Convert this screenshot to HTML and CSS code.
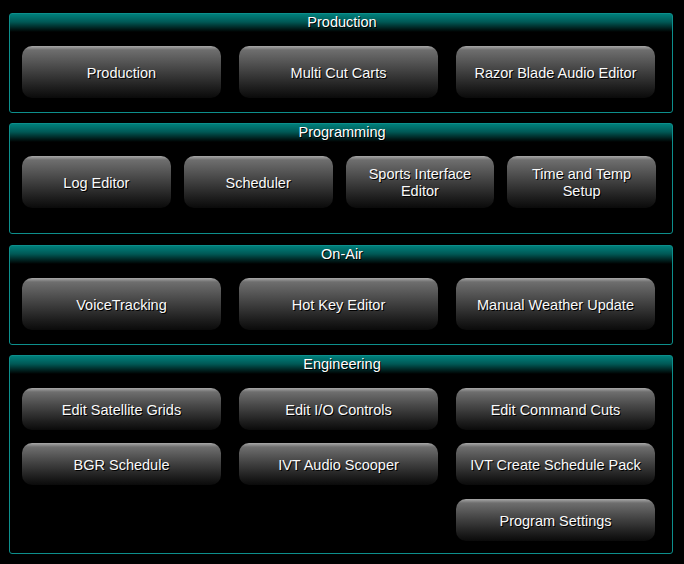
FILE: index.html
```html
<!DOCTYPE html>
<html>
<head>
<meta charset="utf-8">
<link rel="stylesheet" href="styles.css">
</head>
<body>
<div class="page">
  <section class="panel panel-short">
    <div class="panel-title">Production</div>
    <div class="grid cols3">
      <div class="btn">Production</div>
      <div class="btn">Multi Cut Carts</div>
      <div class="btn">Razor Blade Audio Editor</div>
    </div>
  </section>
  <section class="panel panel-prog">
    <div class="panel-title">Programming</div>
    <div class="grid cols4">
      <div class="btn">Log Editor</div>
      <div class="btn">Scheduler</div>
      <div class="btn">Sports Interface<br>Editor</div>
      <div class="btn">Time and Temp<br>Setup</div>
    </div>
  </section>
  <section class="panel panel-short panel-air">
    <div class="panel-title">On-Air</div>
    <div class="grid cols3">
      <div class="btn">VoiceTracking</div>
      <div class="btn">Hot Key Editor</div>
      <div class="btn">Manual Weather Update</div>
    </div>
  </section>
  <section class="panel panel-eng">
    <div class="panel-title">Engineering</div>
    <div class="grid cols3 eng">
      <div class="btn">Edit Satellite Grids</div>
      <div class="btn">Edit I/O Controls</div>
      <div class="btn">Edit Command Cuts</div>
      <div class="btn">BGR Schedule</div>
      <div class="btn">IVT Audio Scooper</div>
      <div class="btn">IVT Create Schedule Pack</div>
      <div class="btn col3">Program Settings</div>
    </div>
  </section>
</div>
</body>
</html>
```

FILE: styles.css
```css
html, body {
  margin: 0;
  padding: 0;
  background: #000;
}
body {
  font-family: "Liberation Sans", Arial, sans-serif;
  font-size: 14.5px;
  color: #fff;
}
.page {
  display: flex;
  flex-direction: column;
  gap: 10px;
  padding: 13px 11px 0 9px;
  width: 664px;
}
.panel {
  box-sizing: border-box;
  border: 1px solid #0d8f8c;
  border-radius: 3px;
  background: linear-gradient(#00807c 0px, #005855 8px, #000 18px, #000 100%);
  padding: 0 16px 0 12px;
}
.panel-short { height: 100px; }
.panel-prog { height: 111px; }
.panel-air { margin-top: 1px; }
.panel-eng { height: 199px; }
.panel-title {
  height: 17px;
  line-height: 16px;
  text-align: center;
  text-shadow: 1px 1px 0 #000;
  margin: 0 -16px 15px -12px;
  padding-left: 2px;
}
.grid {
  display: grid;
}
.cols3 {
  grid-template-columns: repeat(3, 199px);
  column-gap: 18px;
  grid-auto-rows: 52px;
}
.cols4 {
  grid-template-columns: repeat(4, 1fr);
  column-gap: 13px;
  grid-auto-rows: 52px;
}
.eng {
  grid-template-rows: 42px 42px 43px;
  row-gap: 13px;
}
.col3 {
  grid-column: 3;
  align-self: end;
  height: 42px;
}
.btn {
  box-sizing: border-box;
  border-radius: 10px;
  background: linear-gradient(#a8a8a8 0px, #6e6e6e 4px, #4a4a4a 40%, #1e1e1e 80%, #0a0a0a 100%);
  display: flex;
  align-items: center;
  justify-content: center;
  text-align: center;
  line-height: 17px;
  padding-top: 2px;
  color: #fafafa;
  text-shadow: 1px 1px 0 #000;
}
```
